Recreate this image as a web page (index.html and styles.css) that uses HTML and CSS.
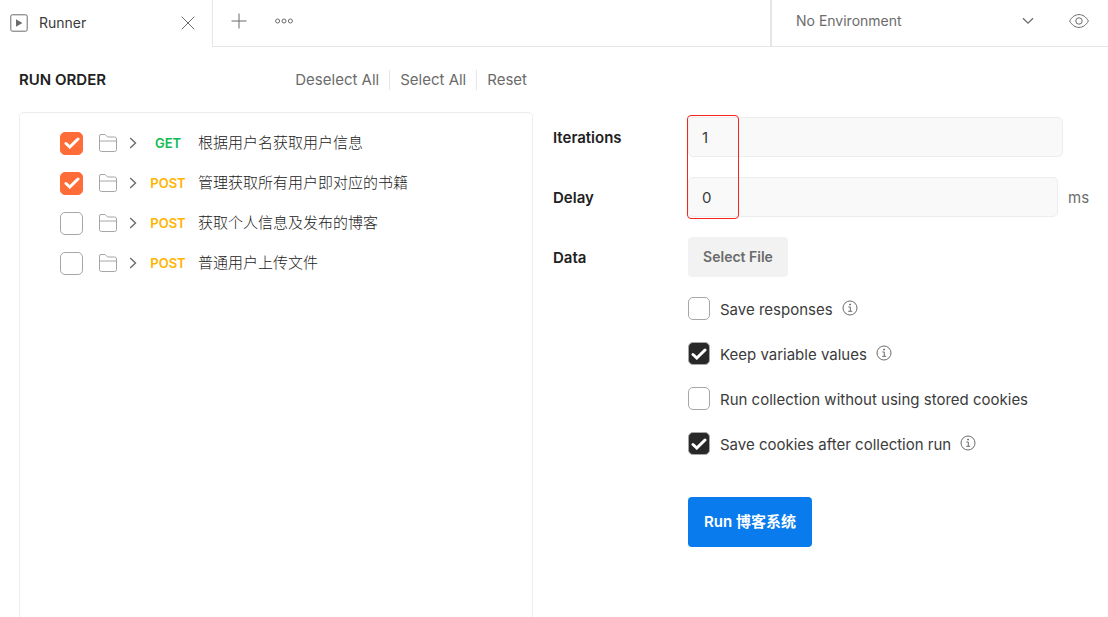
FILE: index.html
```
<!DOCTYPE html>
<html lang="zh-CN">
<head>
  <meta charset="UTF-8">
  <title>Runner</title>
  <meta name="viewport" content="width=device-width, initial-scale=1.0">
  <link rel="stylesheet" href="styles.css">
</head>
<body>
  <svg class="sprite" aria-hidden="true">
    <symbol id="folder" viewBox="0 0 18 18">
      <path d="M0.5 15.5V2Q0.5 0.5 2 0.5H6.2L8.7 3H15.5Q17.5 3 17.5 5V15.5Q17.5 17.5 15.5 17.5H2.5Q0.5 17.5 0.5 15.5ZM0.5 7H17.5"/>
    </symbol>
    <symbol id="chevron" viewBox="0 0 8 12">
      <path d="M1.2 1L6.5 6L1.2 11"/>
    </symbol>
    <symbol id="info" viewBox="0 0 16 16">
      <circle cx="8" cy="8" r="7"/>
      <path d="M6.3 7H8.3V11.2M6.2 11.3H10.2M7.6 4.2H8.6V5H7.6Z"/>
    </symbol>
  </svg>

  <header class="topbar">
    <div class="tab">
      <svg class="icon" width="18" height="18" viewBox="0 0 18 18">
        <rect x="0.8" y="0.8" width="16.4" height="16.4" rx="1.5"/>
        <path class="solid" d="M6 5.2L12.4 9L6 12.8Z"/>
      </svg>
      <span class="tab-name">Runner</span>
      <button class="icon-btn" aria-label="Close tab">
        <svg class="icon" width="14" height="14" viewBox="0 0 14 14"><path d="M0.7 0.7L13.3 13.3M13.3 0.7L0.7 13.3"/></svg>
      </button>
    </div>
    <div class="tab-actions">
      <button class="icon-btn" aria-label="New tab">
        <svg class="icon" width="16" height="16" viewBox="0 0 16 16"><path d="M8 0.5V15.5M0.5 8H15.5"/></svg>
      </button>
      <button class="icon-btn" aria-label="More">
        <svg class="icon" width="18" height="6" viewBox="0 0 18 6"><circle cx="2.6" cy="3" r="2"/><circle cx="9" cy="3" r="2"/><circle cx="15.4" cy="3" r="2"/></svg>
      </button>
    </div>
    <div class="env">
      <select class="env-select" aria-label="Environment">
        <option>No Environment</option>
      </select>
      <button class="icon-btn" aria-label="View environment">
        <svg class="icon" width="20" height="14" viewBox="0 0 20 14">
          <path d="M0.6 7C3 2.8 6.2 0.6 10 0.6S17 2.8 19.4 7C17 11.2 13.8 13.4 10 13.4S3 11.2 0.6 7Z"/>
          <circle cx="10" cy="7" r="3.2"/>
        </svg>
      </button>
    </div>
  </header>

  <main class="runner">
    <section class="order">
      <div class="order-head">
        <h2>RUN ORDER</h2>
        <div class="order-links">
          <button>Deselect All</button>
          <button>Select All</button>
          <button>Reset</button>
        </div>
      </div>
      <ul class="requests">
        <li>
          <input type="checkbox" id="req1" class="check orange" checked>
          <svg class="folder"><use href="#folder"/></svg>
          <svg class="chevron"><use href="#chevron"/></svg>
          <span class="method get">GET</span>
          <label for="req1">根据用户名获取用户信息</label>
        </li>
        <li>
          <input type="checkbox" id="req2" class="check orange" checked>
          <svg class="folder"><use href="#folder"/></svg>
          <svg class="chevron"><use href="#chevron"/></svg>
          <span class="method post">POST</span>
          <label for="req2">管理获取所有用户即对应的书籍</label>
        </li>
        <li>
          <input type="checkbox" id="req3" class="check orange">
          <svg class="folder"><use href="#folder"/></svg>
          <svg class="chevron"><use href="#chevron"/></svg>
          <span class="method post">POST</span>
          <label for="req3">获取个人信息及发布的博客</label>
        </li>
        <li>
          <input type="checkbox" id="req4" class="check orange">
          <svg class="folder"><use href="#folder"/></svg>
          <svg class="chevron"><use href="#chevron"/></svg>
          <span class="method post">POST</span>
          <label for="req4">普通用户上传文件</label>
        </li>
      </ul>
    </section>

    <form class="settings">
      <div class="field iterations">
        <label for="iterations">Iterations</label>
        <input type="text" id="iterations" class="text" value="1">
      </div>
      <div class="field">
        <label for="delay">Delay</label>
        <input type="text" id="delay" class="text" value="0">
        <span class="unit">ms</span>
      </div>
      <div class="field">
        <label for="data">Data</label>
        <button type="button" id="data" class="select-file">Select File</button>
      </div>

      <div class="options">
        <div class="option">
          <input type="checkbox" id="save-responses" class="check">
          <label for="save-responses">Save responses</label>
          <svg class="info"><use href="#info"/></svg>
        </div>
        <div class="option">
          <input type="checkbox" id="keep-values" class="check" checked>
          <label for="keep-values">Keep variable values</label>
          <svg class="info"><use href="#info"/></svg>
        </div>
        <div class="option">
          <input type="checkbox" id="no-cookies" class="check">
          <label for="no-cookies">Run collection without using stored cookies</label>
        </div>
        <div class="option">
          <input type="checkbox" id="save-cookies" class="check" checked>
          <label for="save-cookies">Save cookies after collection run</label>
          <svg class="info"><use href="#info"/></svg>
        </div>
        <button type="button" class="run">Run 博客系统</button>
      </div>
      <div class="marker"></div>
    </form>
  </main>
</body>
</html>
```
FILE: styles.css
```
* {
  box-sizing: border-box;
}
body {
  margin: 0;
  min-height: 100vh;
  display: flex;
  flex-direction: column;
  background: #fff;
  color: #212121;
  font-family: Inter, "Noto Sans CJK SC", sans-serif;
  font-size: 15px;
  line-height: 20px;
}
button, input, select {
  font: inherit;
  color: inherit;
}
button {
  border: none;
  background: none;
  padding: 0;
  cursor: pointer;
}
.sprite {
  position: absolute;
  width: 0;
  height: 0;
}
svg {
  display: block;
  flex: none;
  fill: none;
  stroke: #6b6b6b;
}
.icon .solid {
  fill: #6b6b6b;
  stroke: none;
}

/* top bar */
.topbar {
  display: flex;
  height: 47px;
  font-size: 14px;
}
.tab {
  width: 213px;
  padding: 0 17px 2px 10px;
  display: flex;
  align-items: center;
  border-right: 1px solid #e6e6e6;
}
.tab-name {
  flex: 1;
  margin-left: 11px;
  color: #3b3b3b;
}
.tab-actions {
  flex: 1;
  display: flex;
  align-items: center;
  gap: 28px;
  padding: 0 18px 4px;
  border-bottom: 1px solid #e6e6e6;
}
.env {
  width: 338px;
  display: flex;
  align-items: center;
  padding: 0 19px 5px 24px;
  border-left: 2px solid #e6e6e6;
  border-bottom: 1px solid #e6e6e6;
}
.env-select {
  flex: 1;
  margin-right: 35px;
  padding: 0;
  border: none;
  color: #6b6b6b;
  appearance: none;
  background: url("data:image/svg+xml,%3Csvg xmlns='http://www.w3.org/2000/svg' width='12' height='8' fill='none' stroke='%236b6b6b' stroke-width='1.3'%3E%3Cpath d='M1 1.2L6 6.2L11 1.2'/%3E%3C/svg%3E") no-repeat right center;
}

/* run order */
.runner {
  flex: 1;
  display: grid;
  grid-template-columns: 514fr 536fr;
  gap: 20px;
  padding: 0 19px;
}
.order {
  display: flex;
  flex-direction: column;
}
.order-head {
  display: flex;
  justify-content: space-between;
  align-items: center;
  height: 65px;
}
h2 {
  margin: 0;
  font-size: 15px;
  font-weight: 600;
}
.order-links {
  display: flex;
  margin-right: -4px;
}
.order-links button {
  padding: 0 10px;
  color: #6b6b6b;
}
.order-links button + button {
  border-left: 1px solid #e6e6e6;
}
.requests {
  flex: 1;
  margin: 0;
  padding: 10px 0 0 40px;
  list-style: none;
  border: 1px solid #ededed;
  border-bottom: none;
  border-radius: 5px 5px 0 0;
}
.requests li {
  display: flex;
  align-items: center;
  height: 40px;
}
.requests label {
  font-weight: 300;
}
.folder {
  width: 18px;
  height: 18px;
  margin: 0 12px 0 16px;
  stroke: #a6a6a6;
}
.chevron {
  width: 8px;
  height: 12px;
  stroke-width: 1.4;
}
.method {
  width: 46px;
  margin: 0 7px 0 8px;
  text-align: center;
  font-size: 13px;
  font-weight: 600;
}
.get {
  color: #0cbb52;
}
.post {
  color: #ffb400;
}

/* checkboxes */
.check {
  flex: none;
  appearance: none;
  width: 22px;
  height: 23px;
  margin: 0;
  border: 1px solid #a6a6a6;
  border-radius: 5px;
  background: #fff center no-repeat;
}
.check.orange {
  width: 23px;
}
.check:checked {
  border-color: #a6a6a6;
  background-color: #282828;
  background-image: url("data:image/svg+xml,%3Csvg xmlns='http://www.w3.org/2000/svg' width='16' height='12' fill='none' stroke='white' stroke-width='3' stroke-linecap='round'%3E%3Cpath d='M2 6.5L5.8 10L14 2'/%3E%3C/svg%3E");
}
.check.orange:checked {
  border-color: #ff6c37;
  background-color: #ff6c37;
}

/* settings */
.settings {
  position: relative;
  padding-top: 70px;
}
.field {
  display: flex;
  align-items: center;
  height: 40px;
  margin-bottom: 20px;
}
.field label {
  width: 135px;
  padding-top: 2px;
  font-weight: 600;
}
.iterations {
  margin-right: 26px;
}
.text {
  flex: 1;
  min-width: 0;
  height: 40px;
  padding: 0 13px;
  border: 1px solid #ededed;
  border-radius: 5px;
  background: #f9f9f9;
  color: #3b3b3b;
}
.unit {
  width: 31px;
  padding: 2px 0 0 10px;
  color: #6b6b6b;
}
.select-file {
  width: 100px;
  height: 40px;
  border-radius: 4px;
  background: #f2f2f2;
  color: #6b6b6b;
  font-size: 14px;
  font-weight: 600;
}
.options {
  display: flex;
  flex-direction: column;
  align-items: flex-start;
  gap: 22px;
  margin-left: 135px;
}
.option {
  display: flex;
  align-items: center;
  height: 23px;
  color: #3b3b3b;
}
.option label {
  margin-left: 10px;
  padding-top: 2px;
}
.info {
  width: 16px;
  height: 16px;
  margin: 0 0 2px 9px;
}
.run {
  height: 50px;
  margin-top: 20px;
  padding: 0 16px;
  border-radius: 4px;
  background: #097bed;
  color: #fff;
  font-weight: 600;
}
.marker {
  position: absolute;
  top: 68px;
  left: 134px;
  width: 52px;
  height: 104px;
  border: 1px solid #f5261b;
  border-radius: 4px;
  pointer-events: none;
}
```
